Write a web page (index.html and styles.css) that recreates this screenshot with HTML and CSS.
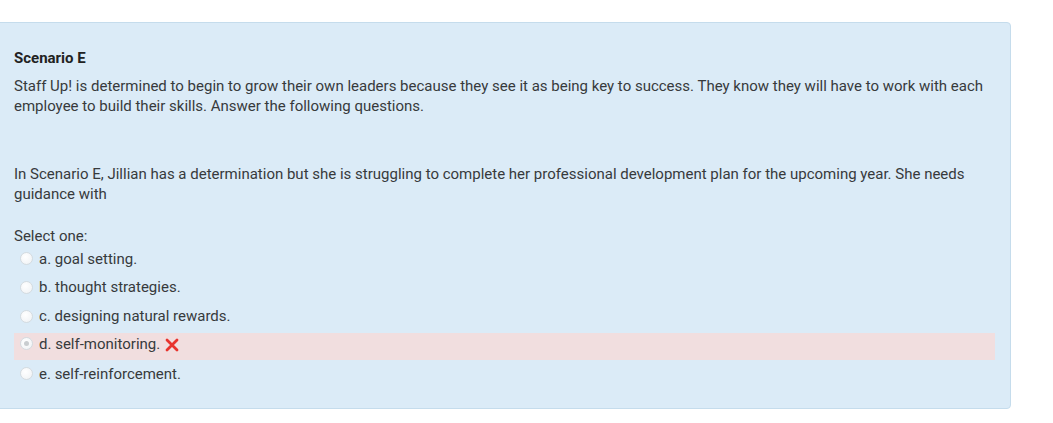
FILE: index.html
```html
<!DOCTYPE html>
<html>
<head>
<meta charset="utf-8">
<link rel="stylesheet" href="styles.css">
</head>
<body>
<div class="que">
  <div class="qtext">
    <p class="title"><strong>Scenario E</strong></p>
    <p>Staff Up! is determined to begin to grow their own leaders because they see it as being key to success. They know they will have to work with each employee to build their skills. Answer the following questions.</p>
    <p class="question">In Scenario E, Jillian has a determination but she is struggling to complete her professional development plan for the upcoming year. She needs guidance with</p>
  </div>
  <div class="ablock">
    <div class="prompt">Select one:</div>
    <div class="answer">
      <div class="opt"><span class="radio"></span><span class="label">a. goal setting.</span></div>
      <div class="opt"><span class="radio"></span><span class="label">b. thought strategies.</span></div>
      <div class="opt"><span class="radio"></span><span class="label">c. designing natural rewards.</span></div>
      <div class="opt incorrect"><span class="radio checked"></span><span class="label">d. self-monitoring.</span>
        <svg class="xicon" width="14" height="14" viewBox="0 0 14 14"><path d="M2 2 L12 12 M12 2 L2 12" stroke="#e8332d" stroke-width="2.8" stroke-linecap="round" fill="none"/></svg>
      </div>
      <div class="opt"><span class="radio"></span><span class="label">e. self-reinforcement.</span></div>
    </div>
  </div>
</div>
</body>
</html>
```
FILE: styles.css
```css
html, body {
  margin: 0;
  padding: 0;
  background: #ffffff;
}
body {
  font-family: Roboto, "Liberation Sans", sans-serif;
  font-size: 15px;
  line-height: 20px;
  color: #373a3c;
}
.que {
  margin-top: 22px;
  margin-left: -6px;
  width: 1017px;
  box-sizing: border-box;
  background: #dbebf7;
  border: 1px solid #c5dcec;
  border-radius: 4px;
  padding: 25px 15px 20px 19px;
}
.qtext p {
  margin: 0;
}
.qtext .title {
  margin-bottom: 8px;
  color: #222;
}
.qtext .question {
  margin-top: 48px;
}
.ablock {
  margin-top: 22px;
}
.answer {
  display: flex;
  flex-direction: column;
  gap: 1.75px;
}
.opt {
  display: flex;
  align-items: center;
  height: 27px;
  padding-bottom: 2px;
  box-sizing: border-box;
}
.opt.incorrect {
  background: #f1dedf;
  margin-top: 0.5px;
  padding-bottom: 5px;
  margin-bottom: -0.5px;
}
.radio {
  width: 11px;
  height: 11px;
  border-radius: 50%;
  border: 1px solid #d4dbe0;
  background: radial-gradient(circle at 40% 35%, #ffffff 0%, #f3f5f7 70%, #e4e8eb 100%);
  margin-left: 6px;
  margin-right: 6px;
  position: relative;
  flex-shrink: 0;
}
.radio.checked::after {
  content: "";
  position: absolute;
  left: 3px;
  top: 3px;
  width: 5px;
  height: 5px;
  border-radius: 50%;
  background: #c9cdd0;
}
.xicon {
  margin-left: 5px;
  margin-top: 2px;
}
```
